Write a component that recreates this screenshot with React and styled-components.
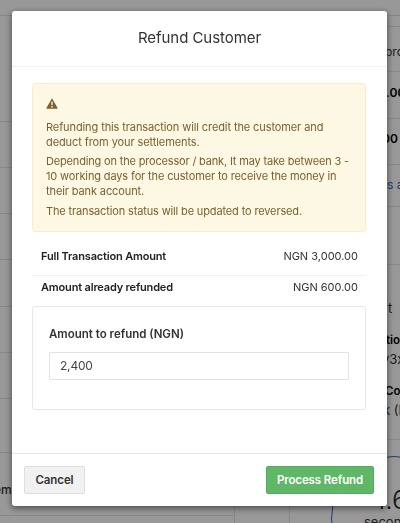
import React from 'react'
import styled, { createGlobalStyle } from 'styled-components'

const GlobalStyle = createGlobalStyle`
  * {
    box-sizing: border-box;
  }

  body {
    background: #fdfdfd;
    color: #333;
    font-family: Inter, 'Liberation Sans', sans-serif;
    margin: 0;
    overflow: hidden;
  }
`

const Page = styled.div`
  display: grid;
  grid-template-columns: 235px 1fr;
  column-gap: 54px;
  height: 523px;
  overflow: hidden;
  padding-top: 15px;
`

const LeftPanel = styled.div`
  border-right: 1px solid #e2e2e2;
  border-top: 1px solid #e2e2e2;
`

const RightPanel = styled.div`
  border-left: 1px solid #e2e2e2;
  border-top: 1px solid #e2e2e2;
  overflow: hidden;
`

const PanelRow = styled.div`
  align-items: center;
  border-bottom: 1px solid #e2e2e2;
  color: ${props => props.color || '#333'};
  display: flex;
  font-size: ${props => props.size || 12}px;
  font-weight: ${props => props.weight || 400};
  height: ${props => props.height}px;
  padding-bottom: ${props => props.lift || 0}px;
  padding-left: ${props => props.indent || 0}px;
  padding-top: ${props => props.drop || 0}px;
  white-space: nowrap;
`

const CellText = styled.span`
  margin-left: -${props => props.shift}px;
`

const Details = styled.div`
  border-bottom: 1px solid #e2e2e2;
  height: 175px;
  line-height: 19px;
  padding-top: 34px;
  white-space: nowrap;
`

const DetailLine = styled.div`
  color: ${props => (props.strong ? '#000' : '#333')};
  font-size: ${props => (props.strong ? 11.5 : 13)}px;
  font-weight: ${props => (props.strong ? 600 : 400)};
  margin-bottom: ${props => props.gap || 0}px;
  padding-left: ${props => props.indent}px;
`

const Dial = styled.div`
  border: 1px solid #2767c4;
  border-radius: 50%;
  height: 126px;
  margin: 16px 0 0 41px;
  padding: 27px 0 0 32px;
  white-space: nowrap;
  width: 126px;
`

const DialValue = styled.div`
  color: #222;
  font-size: 26px;
  font-weight: 300;
  line-height: 32px;
  padding-left: 11px;
`

const DialUnit = styled.div`
  color: #333;
  font-size: 13px;
  line-height: 12px;
`

const Overlay = styled.div`
  background: rgba(0, 0, 0, 0.4);
  inset: 0;
  padding: 11px 13px 0 12px;
  position: fixed;
`

const Modal = styled.div`
  background: #fff;
  border-radius: 3px;
  box-shadow: 0 2px 7px rgba(0, 0, 0, 0.55);
  display: flex;
  flex-direction: column;
  height: 495px;
`

const ModalHeader = styled.h1`
  border-bottom: 1px solid #f1f1f1;
  color: #333;
  font-size: 15px;
  font-weight: 400;
  height: 56px;
  letter-spacing: -0.05px;
  line-height: 54px;
  margin: 0;
  text-align: center;
`

const ModalBody = styled.div`
  flex: 1;
  padding: 16px 21px 0 20px;
`

const Alert = styled.div`
  background: #fcf8e3;
  border: 1px solid #faebcc;
  border-radius: 3px;
  color: #7d602c;
  font-size: 11px;
  height: 149px;
  line-height: 15px;
  padding: 14px 0 0 13px;
`

const WarningIcon = styled.svg`
  display: block;
  height: 11px;
  margin-bottom: 11px;
  width: 12px;
`

const AlertText = styled.p`
  margin: 0 0 ${props => props.gap || 4}px;
  white-space: nowrap;
`

const AlertLine = styled.span`
  display: block;
  letter-spacing: ${props => props.spacing}px;
`

const AmountRow = styled.div`
  align-items: center;
  border-bottom: ${props => (props.last ? 0 : '1px solid #f1f1f1')};
  color: #333;
  display: flex;
  font-size: 11px;
  height: ${props => (props.last ? 30 : 44)}px;
  justify-content: space-between;
  padding: ${props => (props.last ? '0 8px 8px 9px' : '5px 8px 0 9px')};
`

const AmountLabel = styled.span`
  color: #222;
  font-weight: 600;
  letter-spacing: -0.17px;
`

const AmountValue = styled.span``

const RefundBox = styled.div`
  border: 1px solid #e4e8e9;
  border-radius: 3px;
  height: 104px;
  padding: 19px 16px 0;
`

const Label = styled.label`
  color: #333;
  display: block;
  font-size: 11.5px;
  font-weight: 600;
  line-height: 16px;
  margin-bottom: 10px;
`

const Input = styled.input`
  border: 1px solid #dfe5e7;
  border-radius: 1px;
  color: #444;
  display: block;
  font-family: inherit;
  font-size: 12px;
  height: 28px;
  letter-spacing: -0.2px;
  outline: 0;
  padding: 0 10px 2px;
  width: 100%;
`

const ModalFooter = styled.div`
  border-top: 1px solid #e5e5e5;
  display: flex;
  height: 53px;
  justify-content: space-between;
  padding: 12px 13px 0 12px;
`

const Button = styled.button`
  background: ${props => (props.primary ? '#61b768' : '#f1f1f1')};
  border: 1px solid ${props => (props.primary ? '#51ad59' : '#dedede')};
  border-radius: 2px;
  color: ${props => (props.primary ? '#fff' : '#333')};
  font-family: inherit;
  font-size: 11.5px;
  font-weight: 600;
  height: 28px;
  letter-spacing: -0.1px;
  padding: 0 0 1px;
  width: ${props => (props.primary ? 108 : 61)}px;
`

const App = () => (
  <>
    <GlobalStyle />
    <Page>
      <LeftPanel>
        <PanelRow height={106} weight={600} drop={36}>
          <CellText shift={7}>n</CellText>
        </PanelRow>
        {[46, 46, 46, 47, 46, 46, 54].map((height, i) => (
          <PanelRow key={i} height={height} />
        ))}
        <PanelRow height={63} weight={500} size={12} drop={10}>
          <CellText shift={6}>em</CellText>
        </PanelRow>
      </LeftPanel>
      <RightPanel>
        <PanelRow height={11} />
        <PanelRow height={45} indent={95} drop={4}>processor</PanelRow>
        <PanelRow height={47} indent={96} lift={6} weight={600} color="#000">.00</PanelRow>
        <PanelRow height={46} indent={92} lift={6} weight={600} color="#000">00</PanelRow>
        <PanelRow height={42} indent={97} lift={2} color="#2767c4">s a</PanelRow>
        <PanelRow height={58} />
        <Details>
          <DetailLine indent={98} gap={13}>t</DetailLine>
          <DetailLine indent={96} strong>tion</DetailLine>
          <DetailLine indent={92} gap={13}>v3x</DetailLine>
          <DetailLine indent={95} strong>Code</DetailLine>
          <DetailLine indent={93}>k (NG)</DetailLine>
        </Details>
        <Dial>
          <DialValue>1.6</DialValue>
          <DialUnit>seconds</DialUnit>
        </Dial>
      </RightPanel>
    </Page>
    <Overlay>
      <Modal>
        <ModalHeader>Refund Customer</ModalHeader>
        <ModalBody>
          <Alert>
            <WarningIcon viewBox="0 0 12 11">
              <path
                d="M6 0.3 11.6 10q.2.7-.5.7H.9q-.7 0-.5-.7Z"
                fill="#7d602c"
              />
              <path d="M5.2 3.8h1.6L6.5 7.3h-1ZM5.3 8h1.4v1.4H5.3Z" fill="#fcf8e3" />
            </WarningIcon>
            <AlertText>
              <AlertLine spacing={-0.1}>Refunding this transaction will credit the customer and</AlertLine>
              <AlertLine spacing={-0.09}>deduct from your settlements.</AlertLine>
            </AlertText>
            <AlertText gap={5}>
              <AlertLine spacing={-0.17}>Depending on the processor / bank, It may take between 3 -</AlertLine>
              <AlertLine spacing={-0.13}>10 working days for the customer to receive the money in</AlertLine>
              <AlertLine spacing={-0.11}>their bank account.</AlertLine>
            </AlertText>
            <AlertText>
              <AlertLine spacing={-0.14}>The transaction status will be updated to reversed.</AlertLine>
            </AlertText>
          </Alert>
          <AmountRow>
            <AmountLabel>Full Transaction Amount</AmountLabel>
            <AmountValue>NGN 3,000.00</AmountValue>
          </AmountRow>
          <AmountRow last>
            <AmountLabel>Amount already refunded</AmountLabel>
            <AmountValue>NGN 600.00</AmountValue>
          </AmountRow>
          <RefundBox>
            <Label htmlFor="amount">Amount to refund (NGN)</Label>
            <Input id="amount" defaultValue="2,400" />
          </RefundBox>
        </ModalBody>
        <ModalFooter>
          <Button>Cancel</Button>
          <Button primary>Process Refund</Button>
        </ModalFooter>
      </Modal>
    </Overlay>
  </>
)

export default App
